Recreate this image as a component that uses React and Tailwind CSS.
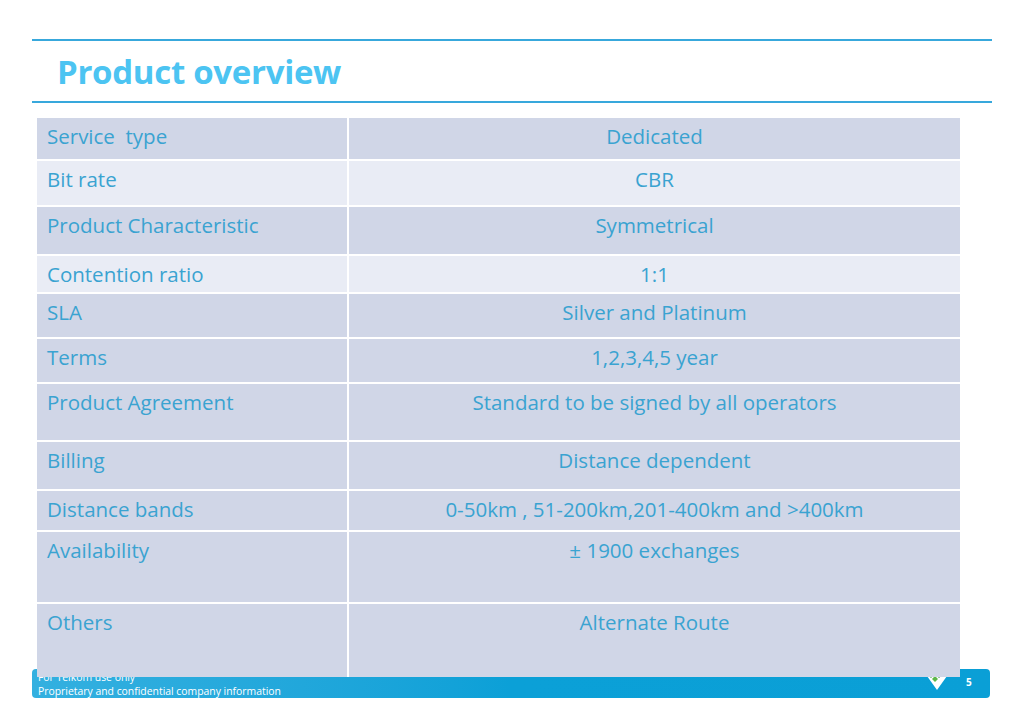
const rows = [
  { label: 'Service  type', value: 'Dedicated', h: 'h-[41px]', tone: 'dark' },
  { label: 'Bit rate', value: 'CBR', h: 'h-[44px]', tone: 'light' },
  { label: 'Product Characteristic', value: 'Symmetrical', h: 'h-[47px]', tone: 'dark' },
  { label: 'Contention ratio', value: '1:1', h: 'h-[36px]', tone: 'light' },
  { label: 'SLA', value: 'Silver and Platinum', h: 'h-[43px]', tone: 'dark' },
  { label: 'Terms', value: '1,2,3,4,5 year', h: 'h-[43px]', tone: 'dark' },
  { label: 'Product Agreement', value: 'Standard to be signed by all operators', h: 'h-[56px]', tone: 'dark' },
  { label: 'Billing', value: 'Distance dependent', h: 'h-[47px]', tone: 'dark' },
  { label: 'Distance bands', value: '0-50km , 51-200km,201-400km and >400km', h: 'h-[39px]', tone: 'dark' },
  { label: 'Availability', value: '± 1900 exchanges', h: 'h-[70px]', tone: 'dark' },
  { label: 'Others', value: 'Alternate Route', h: 'h-[73px]', tone: 'dark' },
];

const TelkomMark = () => (
  <svg width="30" height="22" viewBox="0 0 30 22" className="block">
    <polygon points="0,0 30,0 15,21" fill="#ffffff" />
    <polygon points="9,3 12,6 9,9 6,6" fill="#3aa845" />
    <polygon points="13,7 16,10 13,13 10,10" fill="#5cb848" />
    <polygon points="17,3 20,6 17,9 14,6" fill="#2e9a3e" />
  </svg>
);

export default function App() {
  return (
    <div className="w-full h-[708px] bg-white overflow-hidden font-['Open_Sans','Liberation_Sans',sans-serif]">
      <div className="pt-[39px] pl-[32px] w-[992px]">
        <div className="h-[2px] bg-[#38a8dc]" />
        <div className="h-[60px] flex items-center pl-[25px]">
          <h1 className="text-[33px] font-bold text-[#4cc4f2] leading-none tracking-[-0.3px]">
            Product overview
          </h1>
        </div>
        <div className="h-[2px] bg-[#38a8dc]" />
      </div>

      <div className="relative z-10 mt-[15px] ml-[37px] w-[923px] flex flex-col gap-[2px] bg-white">
        {rows.map((r) => (
          <div key={r.label} className={`grid grid-cols-[310px_1fr] gap-[2px] ${r.h}`}>
            <div
              className={`${r.tone === 'dark' ? 'bg-[#d0d6e7]' : 'bg-[#e9ecf5]'} pl-[10px] pt-[5px] text-[20.5px] leading-[26px] text-[#3aa3d1] whitespace-pre`}
            >
              {r.label}
            </div>
            <div
              className={`${r.tone === 'dark' ? 'bg-[#d0d6e7]' : 'bg-[#e9ecf5]'} pt-[5px] text-center text-[20.5px] leading-[26px] text-[#3aa3d1]`}
            >
              {r.value}
            </div>
          </div>
        ))}
      </div>

      <div className="relative -mt-[8px] ml-[32px] w-[958px] h-[29px] rounded-[4px] bg-gradient-to-r from-[#33b0e0] via-[#0ba0d7] to-[#0a9fd6] flex items-start">
        <div className="pl-[6px] text-white text-[10.4px] leading-[14px]">
          <div className="pt-[1px]">For Telkom use only</div>
          <div>Proprietary and confidential company information</div>
        </div>
        <div className="ml-auto flex items-start">
          <TelkomMark />
          <div className="w-[38px] pl-[14px] pt-[8px] text-white text-[10px] font-bold leading-none">5</div>
        </div>
      </div>
    </div>
  );
}
